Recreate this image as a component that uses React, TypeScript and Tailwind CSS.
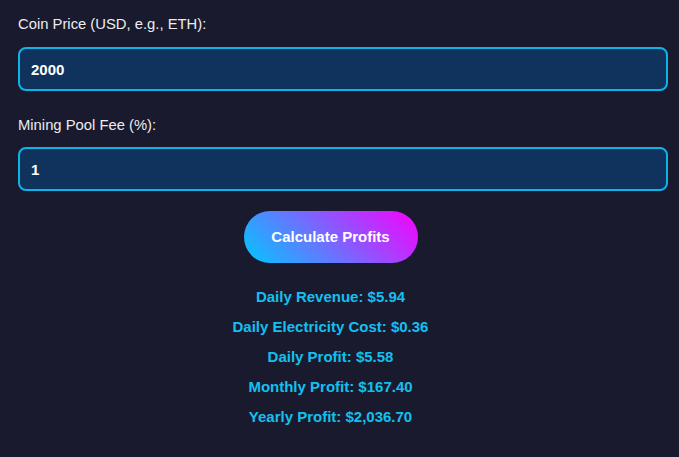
import { useState } from 'react';

const FONT = { fontFamily: '"Liberation Sans", Arial, sans-serif' };

export default function App() {
  const [price, setPrice] = useState('2000');
  const [fee, setFee] = useState('1');

  const results = [
    'Daily Revenue: $5.94',
    'Daily Electricity Cost: $0.36',
    'Daily Profit: $5.58',
    'Monthly Profit: $167.40',
    'Yearly Profit: $2,036.70',
  ];

  return (
    <div className="min-h-[457px] w-full bg-[#1a1a2e] pl-[18px] pt-[14px]" style={FONT}>
      <label className="block text-[14.8px] leading-[20px] text-[#ececf0]">Coin Price (USD, e.g., ETH):</label>
      <input
        value={price}
        onChange={(e) => setPrice(e.target.value)}
        className="mt-[13px] block h-[44px] w-[650px] rounded-lg border-2 border-[#0fb4e6] bg-[#0f335d] pl-[11px] text-[15px] font-bold text-white outline-none"
      />

      <label className="mt-[24px] block text-[14.8px] leading-[20px] text-[#ececf0]">Mining Pool Fee (%):</label>
      <input
        value={fee}
        onChange={(e) => setFee(e.target.value)}
        className="mt-[12px] block h-[44px] w-[650px] rounded-lg border-2 border-[#0fb4e6] bg-[#0f335d] pl-[11px] text-[15px] font-bold text-white outline-none"
      />

      <div className="flex w-[625px] flex-col items-center">
        <button
          type="button"
          className="mt-[20px] h-[52px] w-[174px] rounded-full bg-[linear-gradient(45deg,#00c8ff,#f800ff)] text-[15px] font-bold text-white"
        >
          Calculate Profits
        </button>

        <div className="mt-[19px] flex flex-col items-center">
          {results.map((r) => (
            <p key={r} className="text-[15px] font-bold leading-[30px] text-[#12c0f0]">
              {r}
            </p>
          ))}
        </div>
      </div>
    </div>
  );
}
